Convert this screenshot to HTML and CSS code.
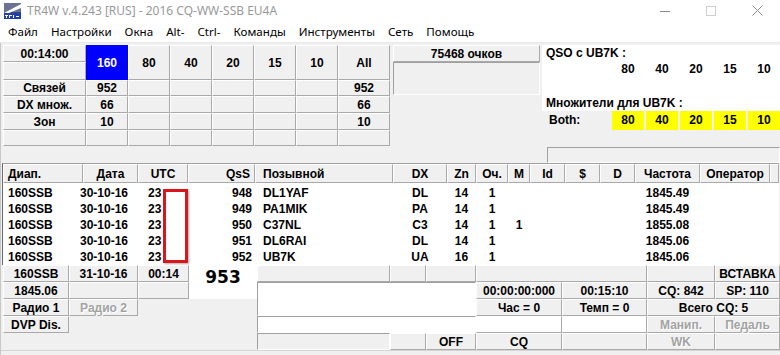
FILE: index.html
```html
<!DOCTYPE html>
<html lang="ru">
<head>
    <meta charset="UTF-8">
    <title>TR4W v.4.243 [RUS] - 2016 CQ-WW-SSB EU4A</title>
    <link rel="stylesheet" href="styles.css">
</head>
<body>
    <div class="titlebar">
        <svg class="app-icon" width="17" height="16" viewBox="0 0 17 16">
            <rect width="17" height="16" fill="#3c4770"/>
            <rect width="17" height="9" fill="#6a7394"/>
            <path d="M0 10 L17 1 L17 5 L5 10 Z" fill="#fff"/>
            <rect y="10" width="17" height="6" fill="#1f3fae"/>
            <rect x="1" y="12" width="3" height="1" fill="#fff"/>
            <rect x="2" y="12" width="1" height="3" fill="#fff"/>
            <rect x="5" y="12" width="1" height="3" fill="#fff"/>
            <rect x="5" y="12" width="3" height="1" fill="#fff"/>
            <rect x="9" y="12" width="1" height="3" fill="#fff"/>
            <rect x="12" y="13" width="3" height="1" fill="#fff"/>
        </svg>
        <span class="title">TR4W v.4.243 [RUS] - 2016 CQ-WW-SSB EU4A</span>
        <div class="win-buttons">
            <span><svg width="10" height="10" viewBox="0 0 10 10"><path d="M0 5.5 H10" stroke="#8c8c8c" stroke-width="1"/></svg></span>
            <span><svg width="10" height="10" viewBox="0 0 10 10"><rect x="0.5" y="0.5" width="9" height="9" fill="none" stroke="#cfcfcf"/></svg></span>
            <span><svg width="11" height="11" viewBox="0 0 11 11"><path d="M0.5 0.5 L10.5 10.5 M10.5 0.5 L0.5 10.5" stroke="#8c8c8c" stroke-width="1"/></svg></span>
        </div>
    </div>

    <div class="menubar">
        <span>Файл</span>
        <span>Настройки</span>
        <span>Окна</span>
        <span>Alt-</span>
        <span>Ctrl-</span>
        <span>Команды</span>
        <span>Инструменты</span>
        <span>Сеть</span>
        <span>Помощь</span>
    </div>

    <div class="workspace">
        <div class="top">
            <div class="bands">
                <div class="cell">00:14:00</div>
                <div class="cell band active">160</div>
                <div class="cell band">80</div>
                <div class="cell band">40</div>
                <div class="cell band">20</div>
                <div class="cell band">15</div>
                <div class="cell band">10</div>
                <div class="cell band">All</div>
                <div class="cell"></div>

                <div class="cell">Связей</div>
                <div class="cell">952</div>
                <div class="cell"></div><div class="cell"></div><div class="cell"></div><div class="cell"></div><div class="cell"></div>
                <div class="cell">952</div>

                <div class="cell">DX множ.</div>
                <div class="cell">66</div>
                <div class="cell"></div><div class="cell"></div><div class="cell"></div><div class="cell"></div><div class="cell"></div>
                <div class="cell">66</div>

                <div class="cell">Зон</div>
                <div class="cell">10</div>
                <div class="cell"></div><div class="cell"></div><div class="cell"></div><div class="cell"></div><div class="cell"></div>
                <div class="cell">10</div>

                <div class="cell"></div><div class="cell"></div><div class="cell"></div><div class="cell"></div>
                <div class="cell"></div><div class="cell"></div><div class="cell"></div><div class="cell"></div>
            </div>

            <div class="score">
                <div class="cell score-total">75468 очков</div>
                <div class="sunken score-box"></div>
            </div>

            <div class="qso-info">
                <div class="qso-white">
                    <div class="qso-title">QSO с UB7K :</div>
                    <div class="qso-bands">
                        <span></span><span>80</span><span>40</span><span>20</span><span>15</span><span>10</span>
                    </div>
                    <div class="qso-title mult">Множители для UB7K :</div>
                </div>
                <div class="qso-bands both">
                    <span class="both-label">Both:</span>
                    <span class="need">80</span>
                    <span class="need">40</span>
                    <span class="need">20</span>
                    <span class="need">15</span>
                    <span class="need">10</span>
                </div>
            </div>
        </div>

        <div class="strip">
            <div class="sunken field"></div>
        </div>

        <div class="log">
            <div class="log-head">
                <span class="left">Диап.</span>
                <span>Дата</span>
                <span>UTC</span>
                <span class="right">QsS</span>
                <span class="left call">Позывной</span>
                <span>DX</span>
                <span>Zn</span>
                <span>Оч.</span>
                <span>M</span>
                <span>Id</span>
                <span>$</span>
                <span>D</span>
                <span>Частота</span>
                <span>Оператор</span>
                <span></span>
            </div>
            <div class="log-body">
                <div class="log-row">
                    <span>160SSB</span><span>30-10-16</span><span>23</span><span>948</span><span>DL1YAF</span>
                    <span>DL</span><span>14</span><span>1</span><span></span><span></span><span></span><span></span>
                    <span>1845.49</span><span></span>
                </div>
                <div class="log-row">
                    <span>160SSB</span><span>30-10-16</span><span>23</span><span>949</span><span>PA1MIK</span>
                    <span>PA</span><span>14</span><span>1</span><span></span><span></span><span></span><span></span>
                    <span>1845.49</span><span></span>
                </div>
                <div class="log-row">
                    <span>160SSB</span><span>30-10-16</span><span>23</span><span>950</span><span>C37NL</span>
                    <span>C3</span><span>14</span><span>1</span><span>1</span><span></span><span></span><span></span>
                    <span>1855.08</span><span></span>
                </div>
                <div class="log-row">
                    <span>160SSB</span><span>30-10-16</span><span>23</span><span>951</span><span>DL6RAI</span>
                    <span>DL</span><span>14</span><span>1</span><span></span><span></span><span></span><span></span>
                    <span>1845.06</span><span></span>
                </div>
                <div class="log-row">
                    <span>160SSB</span><span>30-10-16</span><span>23</span><span>952</span><span>UB7K</span>
                    <span>UA</span><span>16</span><span>1</span><span></span><span></span><span></span><span></span>
                    <span>1845.06</span><span></span>
                </div>
            </div>
            <div class="marker"></div>
        </div>

        <div class="bottom">
            <div class="cell">160SSB</div>
            <div class="cell">31-10-16</div>
            <div class="cell">00:14</div>
            <div class="cell big">953</div>
            <div class="cell"></div>
            <div class="cell"></div>
            <div class="cell"></div>
            <div class="cell span2"></div>
            <div class="cell"></div>
            <div class="cell">ВСТАВКА</div>

            <div class="cell">1845.06</div>
            <div class="cell"></div>
            <div class="cell"></div>
            <div class="sunken white input-tall"></div>
            <div class="cell">00:00:00:000</div>
            <div class="cell">00:15:10</div>
            <div class="cell">CQ: 842</div>
            <div class="cell">SP: 110</div>

            <div class="cell">Радио 1</div>
            <div class="cell dim">Радио 2</div>
            <div class="blank span2"></div>
            <div class="cell">Час = 0</div>
            <div class="cell">Темп = 0</div>
            <div class="cell span2">Всего CQ: 5</div>

            <div class="cell">DVP Dis.</div>
            <div class="blank span3"></div>
            <div class="sunken white span3"></div>
            <div class="cell white"></div>
            <div class="cell white"></div>
            <div class="cell dim">Манип.</div>
            <div class="cell dim">Педаль</div>

            <div class="blank span4"></div>
            <div class="sunken"></div>
            <div class="cell"></div>
            <div class="cell">OFF</div>
            <div class="cell">CQ</div>
            <div class="cell"></div>
            <div class="cell dim">WK</div>
            <div class="cell"></div>
        </div>
        <div class="footer"></div>
    </div>
</body>
</html>
```

FILE: styles.css
```css
* {
    box-sizing: border-box;
}

body {
    margin: 0;
    width: 780px;
    height: 355px;
    overflow: hidden;
    background: #f0f0f0;
    font-family: "Liberation Sans", Arial, sans-serif;
    font-size: 12px;
    font-weight: bold;
    color: #000;
}

/* window chrome */

.titlebar {
    height: 21px;
    background: #fff;
    display: flex;
    align-items: center;
    font-family: "Noto Sans", sans-serif;
    font-weight: normal;
}

.app-icon {
    margin: 0 6px 0 4px;
}

.title {
    color: #999;
    font-size: 12px;
}

.win-buttons {
    margin-left: auto;
    display: flex;
    height: 100%;
}

.win-buttons span {
    width: 46px;
    display: flex;
    align-items: center;
    justify-content: center;
}

.menubar {
    height: 22px;
    background: #fff;
    border-bottom: 1px solid #e8e8e8;
    display: flex;
    align-items: center;
    gap: 13px;
    padding-left: 8px;
    font-family: "Noto Sans", sans-serif;
    font-weight: normal;
    font-size: 11.6px;
}

.workspace {
    padding-top: 2px;
    border-left: 1px solid #c8c8c8;
}

/* shared cells */

.cell {
    display: flex;
    align-items: center;
    justify-content: center;
    white-space: nowrap;
    border: 1px solid;
    border-color: #fff #a9a9a9 #a9a9a9 #fff;
}

.sunken {
    border: 1px solid;
    border-color: #a0a0a0 #fff #fff #a0a0a0;
}

.white {
    background: #fff;
}

.dim {
    color: #a3a3a3;
    text-shadow: 1px 1px 0 #fff;
}

/* top section */

.top {
    display: flex;
    height: 101px;
    padding-left: 2px;
}

.bands {
    width: 387px;
    display: grid;
    grid-template-columns: 83px repeat(6, 42px) 52px;
    grid-template-rows: 17px 18px 16px 17px 17px 16px;
}

.band {
    grid-row: span 2;
}

.band.active {
    background: #0000ff;
    color: #fff;
    border-color: #0000ff;
}

.score {
    width: 150px;
    margin: 0 2px 0 3px;
}

.score-total {
    height: 17px;
}

.score-box {
    height: 33px;
}

.qso-info {
    flex: 1;
}

.qso-white {
    background: #fff;
    height: 66px;
}

.qso-title {
    height: 16px;
    line-height: 16px;
    padding-left: 4px;
}

.qso-title.mult {
    margin-top: 17px;
}

.qso-bands {
    display: grid;
    grid-template-columns: 68px repeat(5, 32px);
    column-gap: 2px;
    height: 17px;
    line-height: 17px;
    text-align: center;
}

.qso-bands.both {
    height: 19px;
    line-height: 19px;
}

.both-label {
    text-align: left;
    padding-left: 7px;
}

.need {
    background: #ffff00;
}

.strip {
    height: 17px;
    display: flex;
    justify-content: flex-end;
}

.field {
    width: 233px;
    height: 16px;
    margin-top: 1px;
}

/* log */

.log {
    position: relative;
    margin-left: 1px;
    width: 777px;
    border-top: 1px solid #a0a0a0;
    border-left: 1px solid #696969;
}

.log-head {
    display: grid;
    grid-template-columns: 80px 55px 50px 67px 138px 54px 29px 32px 22px 35px 35px 35px 65px 70px 1fr;
    height: 19px;
}

.log-head span {
    display: flex;
    align-items: center;
    justify-content: center;
    border: 1px solid;
    border-color: #fff #a9a9a9 #a9a9a9 #fff;
}

.log-head .left {
    justify-content: flex-start;
    padding-left: 4px;
}

.log-head .call {
    padding-left: 7px;
}

.log-head .right {
    justify-content: flex-end;
    padding-right: 4px;
}

.log-body {
    background: #fff;
    height: 82px;
    padding-top: 2px;
}

.log-row {
    display: grid;
    grid-template-columns: 75px 62px 48px 67px 138px 54px 29px 32px 22px 35px 35px 35px 65px 70px 1fr;
    height: 16px;
    line-height: 16px;
    text-align: center;
}

.log-row span:nth-child(1) {
    text-align: left;
    padding-left: 5px;
}

.log-row span:nth-child(2) {
    text-align: left;
    padding-left: 2px;
}

.log-row span:nth-child(3) {
    text-align: left;
    padding-left: 8px;
}

.log-row span:nth-child(4) {
    text-align: right;
    padding-right: 3px;
}

.log-row span:nth-child(5) {
    text-align: left;
    padding-left: 8px;
}

.marker {
    position: absolute;
    left: 160px;
    top: 25px;
    width: 25px;
    height: 74px;
    background: #fff;
    border: 3px solid #d9161c;
    box-shadow: 1px 1px 2px rgba(0, 0, 0, 0.35);
}

/* bottom panel */

.bottom {
    display: grid;
    grid-template-columns: 66px 69px 51px 68px 133px 36px 50px 86px 85px 68px 1fr;
    grid-template-rows: repeat(5, 17px);
    margin-left: 2px;
}

.big {
    grid-row: span 2;
    align-items: flex-start;
    background: #fff;
    border-color: #fff;
    font-family: "DejaVu Sans", sans-serif;
    font-size: 17px;
    line-height: 20px;
    padding-top: 1px;
}

.input-tall {
    grid-column: span 3;
    grid-row: span 2;
}

.span2 {
    grid-column: span 2;
}

.span3 {
    grid-column: span 3;
}

.span4 {
    grid-column: span 4;
}

.footer {
    height: 5px;
    border-top: 1px solid #d4d4d4;
}
```
